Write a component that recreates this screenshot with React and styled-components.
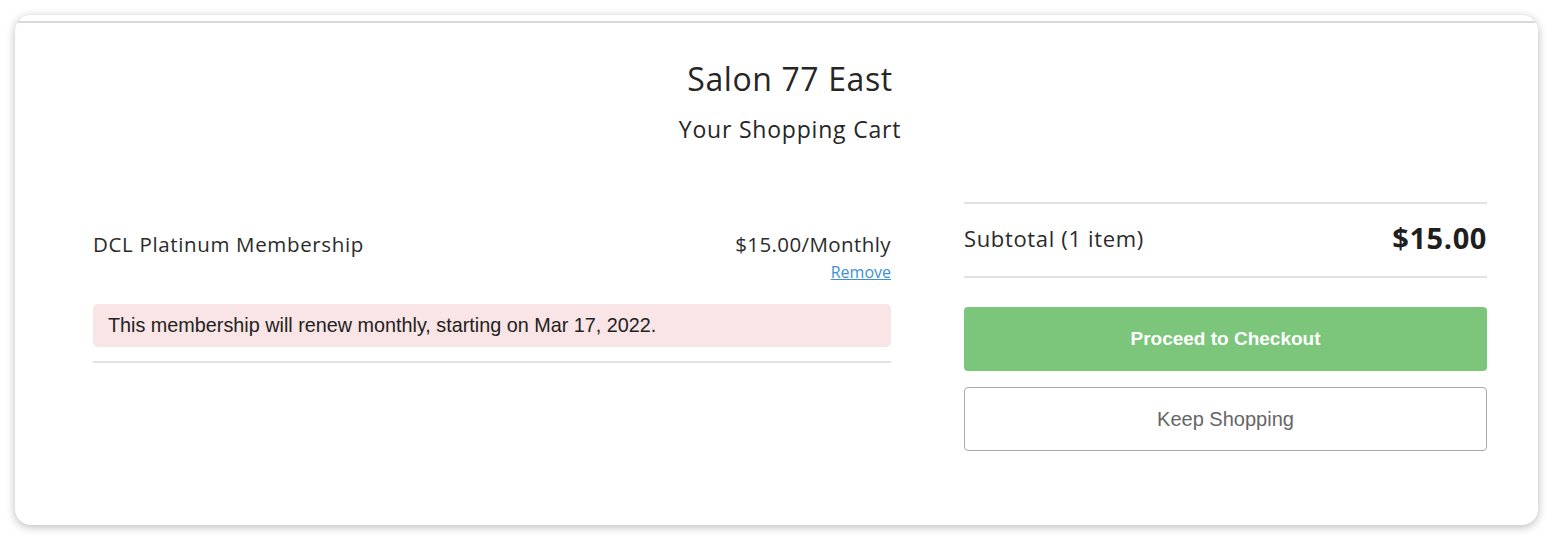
import React from "react";
import styled, { createGlobalStyle } from "styled-components";

const GlobalStyle = createGlobalStyle`
  html, body {
    margin: 0;
    padding: 0;
    background: #ffffff;
  }
  body {
    font-family: "Open Sans", Lato, sans-serif;
    color: #2b2b2b;
  }
`;

const Page = styled.div`
  padding: 15px 16px 15px 15px;
  height: 540px;
  box-sizing: border-box;
`;

const Card = styled.div`
  height: 510px;
  box-sizing: border-box;
  background: #fff;
  border-radius: 16px;
  box-shadow: 0 2px 10px rgba(0, 0, 0, 0.28);
  padding-top: 6px;
  overflow: hidden;
`;

const TopRule = styled.div`
  height: 2px;
  background: #d9d9d9;
  margin: 0 1px;
`;

const Body = styled.div`
  padding: 0 51px 0 78px;
`;

const Header = styled.div`
  text-align: center;
  padding-top: 36px;
`;

const Title = styled.h1`
  margin: 0;
  font-size: 32px;
  font-weight: 400;
  letter-spacing: 0.6px;
  line-height: 40px;
  color: #262626;
`;

const Subtitle = styled.h2`
  margin: 16px 0 0;
  font-size: 23px;
  font-weight: 400;
  letter-spacing: 0.8px;
  line-height: 28px;
  color: #262626;
`;

const Columns = styled.div`
  display: grid;
  grid-template-columns: 798px 523px;
  column-gap: 73px;
  margin-top: 59px;
`;

const ItemColumn = styled.div`
  padding-top: 29px;
`;

const ItemRow = styled.div`
  display: flex;
  justify-content: space-between;
  align-items: flex-start;
`;

const ItemName = styled.div`
  font-size: 20.5px;
  letter-spacing: 0.65px;
  line-height: 26px;
`;

const PriceBlock = styled.div`
  text-align: right;
`;

const Price = styled.div`
  font-size: 20.5px;
  letter-spacing: 0.4px;
  line-height: 26px;
`;

const RemoveLink = styled.a`
  display: inline-block;
  margin-top: 5px;
  font-size: 16px;
  line-height: 20px;
  color: #3d8fd6;
  text-decoration: underline;
  cursor: pointer;
`;

const Notice = styled.div`
  margin-top: 21px;
  background: #f9e5e5;
  border-radius: 5px;
  padding: 0 15px;
  height: 43px;
  display: flex;
  align-items: center;
  font-family: "Liberation Sans", Arial, sans-serif;
  font-size: 19.8px;
  color: #222;
`;

const Divider = styled.div`
  margin-top: 14px;
  height: 2px;
  background: #e2e2e2;
`;

const SummaryColumn = styled.div`
  display: flex;
  flex-direction: column;
`;

const Subtotal = styled.div`
  display: flex;
  justify-content: space-between;
  align-items: center;
  height: 72px;
  box-sizing: content-box;
  padding-bottom: 0;
  border-top: 2px solid #e2e2e2;
  border-bottom: 2px solid #e2e2e2;
`;

const SubtotalLabel = styled.span`
  font-size: 22px;
  letter-spacing: 0.65px;
  margin-top: -4px;
`;

const SubtotalValue = styled.span`
  font-size: 29px;
  font-weight: 700;
  letter-spacing: 0.6px;
  margin-top: -6px;
  color: #1f1f1f;
`;

const Button = styled.button`
  height: 64px;
  width: 100%;
  margin-top: ${(p) => (p.$primary ? "29px" : "16px")};
  border-radius: 4px;
  font-family: "Liberation Sans", Arial, sans-serif;
  font-size: ${(p) => (p.$primary ? "19px" : "20px")};
  cursor: pointer;
  background: ${(p) => (p.$primary ? "#7bc67a" : "#ffffff")};
  color: ${(p) => (p.$primary ? "#ffffff" : "#666666")};
  border: ${(p) => (p.$primary ? "none" : "1px solid #a9a9a9")};
  font-weight: ${(p) => (p.$primary ? 700 : 400)};
`;

export default function App() {
  return (
    <>
      <GlobalStyle />
      <Page>
        <Card>
          <TopRule />
          <Body>
            <Header>
              <Title>Salon 77 East</Title>
              <Subtitle>Your Shopping Cart</Subtitle>
            </Header>
            <Columns>
              <ItemColumn>
                <ItemRow>
                  <ItemName>DCL Platinum Membership</ItemName>
                  <PriceBlock>
                    <Price>$15.00/Monthly</Price>
                    <RemoveLink>Remove</RemoveLink>
                  </PriceBlock>
                </ItemRow>
                <Notice>
                  This membership will renew monthly, starting on Mar 17, 2022.
                </Notice>
                <Divider />
              </ItemColumn>
              <SummaryColumn>
                <Subtotal>
                  <SubtotalLabel>Subtotal (1 item)</SubtotalLabel>
                  <SubtotalValue>$15.00</SubtotalValue>
                </Subtotal>
                <Button $primary>Proceed to Checkout</Button>
                <Button>Keep Shopping</Button>
              </SummaryColumn>
            </Columns>
          </Body>
        </Card>
      </Page>
    </>
  );
}
